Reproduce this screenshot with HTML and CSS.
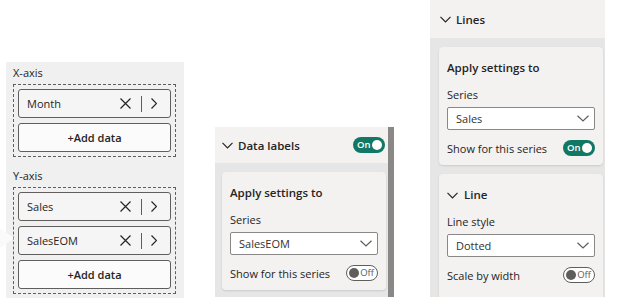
FILE: index.html
```html
<html>
<head>
    <title>Visual fields and format</title>
    <meta charset="UTF-8">
<link rel="stylesheet" href="styles.css">
</head>
<body>
    <div id="stage">
        <div id="wells">
            <div class="wellLabel">X-axis</div>
            <div class="well">
                <div class="field">
                    <span class="fieldName">Month</span>
                    <svg class="iconX" width="11" height="11" viewBox="0 0 11 11"><path d="M0.5 0.5 L10.5 10.5 M10.5 0.5 L0.5 10.5" /></svg>
                    <span class="fieldSep"></span>
                    <svg class="iconMore" width="6" height="11" viewBox="0 0 6 11"><path d="M0.5 0.5 L5.5 5.5 L0.5 10.5" /></svg>
                </div>
                <div class="addData">+Add data</div>
            </div>
            <div class="wellLabel wellLabelNext">Y-axis</div>
            <div class="well">
                <div class="field">
                    <span class="fieldName">Sales</span>
                    <svg class="iconX" width="11" height="11" viewBox="0 0 11 11"><path d="M0.5 0.5 L10.5 10.5 M10.5 0.5 L0.5 10.5" /></svg>
                    <span class="fieldSep"></span>
                    <svg class="iconMore" width="6" height="11" viewBox="0 0 6 11"><path d="M0.5 0.5 L5.5 5.5 L0.5 10.5" /></svg>
                </div>
                <div class="field">
                    <span class="fieldName">SalesEOM</span>
                    <svg class="iconX" width="11" height="11" viewBox="0 0 11 11"><path d="M0.5 0.5 L10.5 10.5 M10.5 0.5 L0.5 10.5" /></svg>
                    <span class="fieldSep"></span>
                    <svg class="iconMore" width="6" height="11" viewBox="0 0 6 11"><path d="M0.5 0.5 L5.5 5.5 L0.5 10.5" /></svg>
                </div>
                <div class="addData">+Add data</div>
            </div>
            <div class="dragNotch"></div>
        </div>

        <div id="paneMid" class="pane">
            <div class="paneBody">
                <div class="sectionHead">
                    <svg class="chevDown" width="11" height="7" viewBox="0 0 11 7"><path d="M0.5 0.8 L5.5 5.8 L10.5 0.8" /></svg>
                    <span class="sectionTitle">Data labels</span>
                    <div class="toggle toggleOn"><span>On</span><i></i></div>
                </div>
                <div class="paneInner">
                    <div class="card">
                        <div class="cardTitle">Apply settings to</div>
                        <div class="fieldLabel">Series</div>
                        <div class="dropdown"><span>SalesEOM</span>
                            <svg class="chevDown" width="12" height="7" viewBox="0 0 12 7"><path d="M0.5 0.8 L6 6 L11.5 0.8" /></svg>
                        </div>
                        <div class="toggleRow">
                            <span>Show for this series</span>
                            <div class="toggle toggleOff"><i></i><span>Off</span></div>
                        </div>
                    </div>
                </div>
            </div>
            <div class="scrollbar"></div>
        </div>

        <div id="paneRight" class="pane">
            <div class="paneBody">
                <div class="sectionHead sectionHeadTall">
                    <svg class="chevDown" width="11" height="7" viewBox="0 0 11 7"><path d="M0.5 0.8 L5.5 5.8 L10.5 0.8" /></svg>
                    <span class="sectionTitle">Lines</span>
                </div>
                <div class="paneInner">
                    <div class="card">
                        <div class="cardTitle">Apply settings to</div>
                        <div class="fieldLabel">Series</div>
                        <div class="dropdown"><span>Sales</span>
                            <svg class="chevDown" width="12" height="7" viewBox="0 0 12 7"><path d="M0.5 0.8 L6 6 L11.5 0.8" /></svg>
                        </div>
                        <div class="toggleRow">
                            <span>Show for this series</span>
                            <div class="toggle toggleOn"><span>On</span><i></i></div>
                        </div>
                    </div>
                    <div class="card cardOpen">
                        <div class="cardTitle">
                            <svg class="chevDown" width="11" height="7" viewBox="0 0 11 7"><path d="M0.5 0.8 L5.5 5.8 L10.5 0.8" /></svg>
                            Line
                        </div>
                        <div class="fieldLabel">Line style</div>
                        <div class="dropdown"><span>Dotted</span>
                            <svg class="chevDown" width="12" height="7" viewBox="0 0 12 7"><path d="M0.5 0.8 L6 6 L11.5 0.8" /></svg>
                        </div>
                        <div class="toggleRow">
                            <span>Scale by width</span>
                            <div class="toggle toggleOff"><i></i><span>Off</span></div>
                        </div>
                    </div>
                </div>
            </div>
        </div>
    </div>
</body>
</html>
```

FILE: styles.css
```css
body {
    margin: 0;
    padding: 0;
    background-color: #fff;
    font-family: "Segoe UI", "Open Sans", sans-serif;
    font-size: 11px;
    color: #252423;
}

#stage {
    display: flex;
    align-items: flex-start;
    width: 644px;
    height: 306px;
    overflow: hidden;
}

/* field wells */

#wells {
    position: relative;
    box-sizing: border-box;
    margin-left: 6px;
    margin-top: 62px;
    width: 178px;
    height: 236px;
    padding: 0 8px 0 7px;
    background-color: #f0f0f0;
}

.wellLabel {
    height: 22px;
    line-height: 22px;
}

.wellLabelNext {
    margin-top: 8px;
}

.well {
    display: flex;
    flex-direction: column;
    gap: 5px;
    padding: 4px;
    border: 1px dashed #605e5c;
}

.field,
.addData {
    box-sizing: border-box;
    height: 29px;
    border: 1px solid #605e5c;
    border-radius: 3px;
}

.field {
    display: flex;
    align-items: center;
    padding: 0 13px 0 8px;
    background-color: #f5f5f5;
}

.fieldName {
    flex: 1;
}

.iconX path,
.iconMore path,
.chevDown path {
    fill: none;
    stroke: #252423;
    stroke-width: 1.2;
}

.fieldSep {
    width: 1px;
    height: 16px;
    margin: 0 9px 0 10px;
    background-color: #605e5c;
}

.addData {
    line-height: 27px;
    text-align: center;
    font-weight: 600;
    background-color: #fbfbfb;
}

.dragNotch {
    position: absolute;
    left: -6px;
    top: 166px;
    width: 0;
    height: 0;
    border-top: 10px solid transparent;
    border-bottom: 10px solid transparent;
    border-left: 14px solid #fafafa;
}

/* format panes */

.pane {
    display: flex;
}

#paneMid {
    margin-left: 31px;
    margin-top: 127px;
    height: 170px;
}

#paneRight {
    margin-left: 36px;
    height: 297px;
}

.paneBody {
    display: flex;
    flex-direction: column;
    width: 173px;
    background-color: #e6e6e6;
    overflow: hidden;
}

#paneRight .paneBody {
    width: 175px;
}

.scrollbar {
    width: 6px;
    background-color: #8a8886;
}

.sectionHead {
    display: flex;
    flex-shrink: 0;
    align-items: center;
    height: 36px;
    padding: 0 3px 0 7px;
    background-color: #f3f2f1;
}

.sectionHeadTall {
    height: 38px;
    padding-left: 10px;
}

.sectionTitle {
    flex: 1;
    margin-left: 5px;
    font-size: 11.5px;
    font-weight: 600;
}

.paneInner {
    display: flex;
    flex-shrink: 0;
    flex-direction: column;
    gap: 9px;
    padding: 9px 2px 0 7px;
}

#paneRight .paneInner {
    padding-left: 9px;
}

.card {
    flex-shrink: 0;
    padding: 11px 8px 7px 8px;
    background-color: #f3f2f1;
    border-radius: 4px;
    box-shadow: 0 1px 2px rgba(0, 0, 0, 0.12);
}

.cardOpen {
    padding-bottom: 30px;
}

.cardTitle {
    display: flex;
    align-items: center;
    gap: 6px;
    line-height: 20px;
    font-size: 11.5px;
    font-weight: 600;
}

.fieldLabel {
    margin-top: 7px;
    line-height: 20px;
}

.dropdown {
    display: flex;
    align-items: center;
    box-sizing: border-box;
    height: 23px;
    margin-top: 2px;
    padding: 0 5px 0 8px;
    background-color: #fff;
    border: 1px solid #8a8886;
    border-radius: 2px;
}

.dropdown span {
    flex: 1;
    color: #323130;
}

.dropdown .chevDown path {
    stroke: #605e5c;
}

.toggleRow {
    display: flex;
    align-items: center;
    justify-content: space-between;
    height: 20px;
    margin-top: 8px;
}

.toggle {
    box-sizing: border-box;
    display: flex;
    align-items: center;
    justify-content: space-between;
    width: 32px;
    height: 16px;
    padding: 0 3px 0 4px;
    border-radius: 8px;
    font-size: 9.5px;
    line-height: 14px;
}

.toggle i {
    display: block;
    width: 10px;
    height: 10px;
    border-radius: 50%;
}

.toggleOn {
    background-color: #117865;
    color: #fff;
    font-weight: 600;
}

.toggleOn i {
    background-color: #fff;
}

.toggleOff {
    padding: 0 3px 0 2px;
    background-color: #fff;
    border: 1px solid #605e5c;
    color: #605e5c;
}

.toggleOff i {
    background-color: #605e5c;
}
```
